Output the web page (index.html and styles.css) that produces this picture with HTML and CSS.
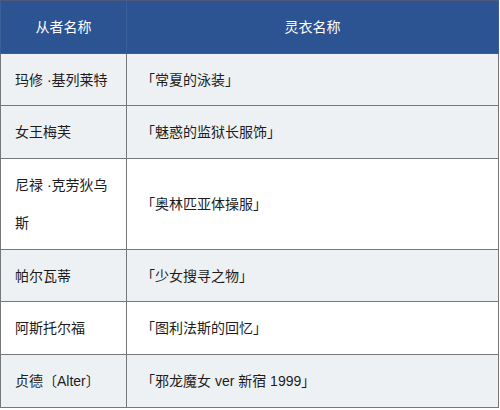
FILE: index.html
```html
<!DOCTYPE html>
<html lang="zh">
<head>
<meta charset="utf-8">
<link rel="stylesheet" href="styles.css">
</head>
<body>
<table class="outfits">
  <thead>
    <tr><th class="col-name">从者名称</th><th>灵衣名称</th></tr>
  </thead>
  <tbody>
    <tr class="shade"><td>玛修 ·基列莱特</td><td>「常夏的泳装」</td></tr>
    <tr class="shade"><td>女王梅芙</td><td>「魅惑的监狱长服饰」</td></tr>
    <tr class="plain"><td>尼禄 ·克劳狄乌斯</td><td>「奥林匹亚体操服」</td></tr>
    <tr class="shade"><td>帕尔瓦蒂</td><td>「少女搜寻之物」</td></tr>
    <tr class="plain"><td>阿斯托尔福</td><td>「图利法斯的回忆」</td></tr>
    <tr class="shade"><td>贞德〔Alter〕</td><td>「邪龙魔女 ver 新宿 1999」</td></tr>
  </tbody>
</table>
</body>
</html>
```
FILE: styles.css
```css
html, body {
  margin: 0;
  padding: 0;
  background: #ffffff;
}
body {
  font-family: "Liberation Sans", "Noto Sans CJK SC", sans-serif;
  font-size: 14px;
  color: #1c1c1c;
}
.outfits {
  width: 499px;
  border-collapse: collapse;
  table-layout: fixed;
}
.outfits th, .outfits td {
  border: 1px solid #777777;
  padding: 7px 14px 6.7px;
  line-height: 38px;
  vertical-align: middle;
}
.outfits th {
  background: #2c5493;
  color: #ffffff;
  font-weight: normal;
  text-align: center;
  border-color: #3a5f98;
  border-top-color: #4a5a78;
}
.outfits .col-name {
  width: 97px;
}
.outfits td {
  text-align: left;
  word-break: break-all;
}
.shade td {
  background: #eef1f4;
}
.plain td {
  background: #ffffff;
}
```
